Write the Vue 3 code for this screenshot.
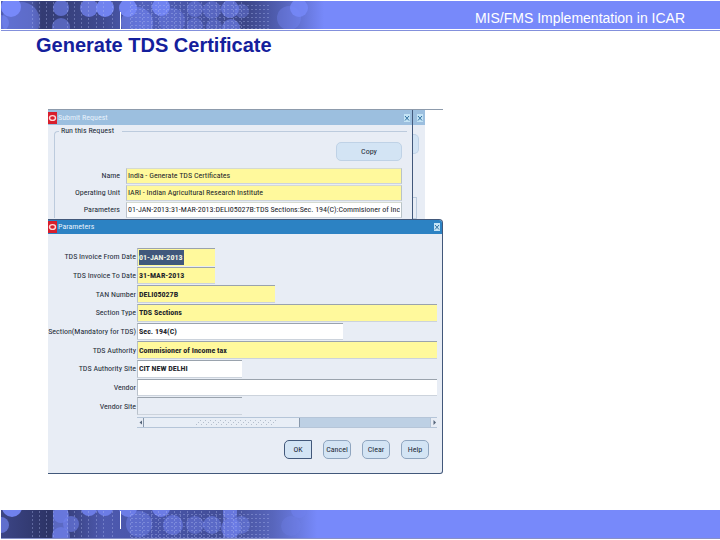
<script setup>
import { ref } from 'vue'

const requestRows = ref([
  { id: 'req-name', label: 'Name', value: 'India - Generate TDS Certificates', tone: 'required' },
  { id: 'req-unit', label: 'Operating Unit', value: 'IARI - Indian Agricultural Research Institute', tone: 'required' },
  { id: 'req-params', label: 'Parameters', value: '01-JAN-2013:31-MAR-2013:DELI05027B:TDS Sections:Sec. 194(C):Commisioner of Income', tone: 'plain' }
])

const paramRows = ref([
  { id: 'p-from', label: 'TDS Invoice From Date', value: '01-JAN-2013', tone: 'required', size: 'date', selected: true },
  { id: 'p-to', label: 'TDS Invoice To Date', value: '31-MAR-2013', tone: 'required', size: 'date' },
  { id: 'p-tan', label: 'TAN Number', value: 'DELI05027B', tone: 'required', size: 'medium' },
  { id: 'p-type', label: 'Section Type', value: 'TDS Sections', tone: 'required', size: 'full' },
  { id: 'p-section', label: 'Section(Mandatory for TDS)', value: 'Sec. 194(C)', tone: 'plain', size: 'wide' },
  { id: 'p-auth', label: 'TDS Authority', value: 'Commisioner of Income tax', tone: 'required', size: 'full' },
  { id: 'p-site', label: 'TDS Authority Site', value: 'CIT NEW DELHI', tone: 'plain', size: 'short' },
  { id: 'p-vendor', label: 'Vendor', value: '', tone: 'plain', size: 'full' },
  { id: 'p-vsite', label: 'Vendor Site', value: '', tone: 'off', size: 'short' }
])

const columns = [32, 39, 46, 53, 67, 74, 81, 88, 96, 103, 112, 130, 142, 151, 158, 166, 174, 180, 187, 194, 201, 209, 216, 224, 233, 241]
const lines = [4, 8, 12, 16, 20, 24, 27]

const topDots = [
  [20, 20, 19, 0.45], [10, 6, 10, 1], [0, 22, 8, 0.5], [60, 7, 8, 0.6], [60, 26, 9, 0.5],
  [88, 7, 9, 0.7], [104, 7, 9, 0.9], [127, 7, 9, 0.9], [136, 22, 16, 0.5], [160, 6, 9, 0.85],
  [171, 20, 13, 0.35], [194, 8, 8, 0.4], [211, 9, 9, 0.4], [194, 25, 8, 0.35], [213, 26, 8, 0.35],
  [229, 8, 9, 0.6], [230, 27, 9, 0.55], [241, 10, 7, 0.35], [288, 17, 12, 0.35], [298, 7, 9, 0.8]
]
const bottomDots = [
  [11, -3, 10, 1], [0, 15, 8, 0.7], [60, 5, 8, 0.6], [60, 26, 9, 0.6], [70, 14, 8, 0.6],
  [88, -2, 8, 0.9], [104, -2, 8, 0.9], [127, -2, 9, 0.9], [138, 14, 13, 0.5], [160, -2, 9, 0.9],
  [172, 15, 10, 0.6], [194, 15, 9, 0.45], [211, 15, 9, 0.55], [229, 2, 7, 0.6], [230, 18, 10, 0.6],
  [240, 15, 9, 0.5], [298, 0, 8, 0.6], [290, 16, 10, 0.3]
]
</script>

<template>
  <div class="page">
    <header class="band band-top">
      <svg class="art" viewBox="0 0 340 28" aria-hidden="true">
        <defs>
          <linearGradient id="shadeTop">
            <stop offset="0" stop-color="#4f5cb4" />
            <stop offset="0.09" stop-color="#48549f" />
            <stop offset="0.12" stop-color="#333b72" />
            <stop offset="0.3" stop-color="#3f4a90" />
            <stop offset="0.42" stop-color="#5261bc" />
            <stop offset="0.56" stop-color="#4855a6" />
            <stop offset="0.72" stop-color="#3c4688" />
            <stop offset="0.82" stop-color="#5260b4" />
            <stop offset="0.95" stop-color="#7789fa" />
          </linearGradient>
        </defs>
        <rect width="340" height="28" fill="url(#shadeTop)" />
        <circle v-for="(d, i) in topDots" :key="i" :cx="d[0]" :cy="d[1]" :r="d[2]" :opacity="d[3]" fill="#7789fa" />
        <g stroke="#b4c0f4" stroke-dasharray="2 2" opacity="0.35">
          <line v-for="x in columns" :key="x" :x1="x - 0.5" :x2="x - 0.5" y1="1" y2="28" />
          <line v-for="y in lines" :key="y" x1="130" x2="270" :y1="y + 0.5" :y2="y + 0.5" />
        </g>
        <rect x="119" y="11" width="1" height="17" fill="#fff" />
      </svg>
      <p class="course">MIS/FMS Implementation in ICAR</p>
    </header>

    <main class="content">
      <h1>Generate TDS Certificate</h1>

      <div class="stage">
        <div class="request-area">
          <section class="request">
            <div class="bar bar-idle">
              <svg class="logo" viewBox="0 0 9 12" aria-hidden="true"><rect width="9" height="12" fill="#d81e2c" /><ellipse cx="4.5" cy="6" rx="3" ry="2.4" fill="none" stroke="#ffd9d9" stroke-width="1.4" /></svg>
              <h2>Submit Request</h2>
              <button class="close" type="button" aria-label="Close request"><svg viewBox="0 0 6 8"><path d="M1 2L5 6.5M5 2L1 6.5" stroke="#2f6f9f" stroke-width="1" /></svg></button>
            </div>
            <fieldset>
              <legend>Run this Request</legend>
              <div class="copy-line"><button class="copy" type="button">Copy</button></div>
              <div v-for="row in requestRows" :key="row.id" class="request-row">
                <label :for="row.id">{{ row.label }}</label>
                <input :id="row.id" v-model="row.value" type="text" :class="row.tone" />
              </div>
            </fieldset>
          </section>
          <aside class="behind">
            <div class="bar bar-idle">
              <button class="close" type="button" aria-label="Close window"><svg viewBox="0 0 6 8"><path d="M1 2L5 6.5M5 2L1 6.5" stroke="#2f6f9f" stroke-width="1" /></svg></button>
            </div>
            <div class="sliver"></div>
            <div class="rail"></div>
          </aside>
        </div>

        <section class="params">
          <div class="bar bar-active">
            <svg class="logo" viewBox="0 0 9 12" aria-hidden="true"><rect width="9" height="12" fill="#d81e2c" /><ellipse cx="4.5" cy="6" rx="3" ry="2.4" fill="none" stroke="#ffd9d9" stroke-width="1.4" /></svg>
            <h2>Parameters</h2>
            <button class="close" type="button" aria-label="Close parameters"><svg viewBox="0 0 6 8"><path d="M1 2L5 6.5M5 2L1 6.5" stroke="#2f6f9f" stroke-width="1" /></svg></button>
          </div>
          <form @submit.prevent>
            <div class="param-rows">
              <div v-for="row in paramRows" :key="row.id" class="param-row">
                <label :for="row.id">{{ row.label }}</label>
                <div v-if="row.selected" class="selected-field" :class="[row.tone, row.size]">
                  <input :id="row.id" v-model="row.value" type="text" class="marked" />
                </div>
                <input v-else :id="row.id" v-model="row.value" type="text" :class="[row.tone, row.size]" />
              </div>
            </div>
            <div class="scroll">
              <button type="button" aria-label="Scroll left"><svg viewBox="0 0 7 9"><path d="M5 2.5V6.5L2.5 4.5Z" fill="#55657a" /></svg></button>
              <div class="thumb">
                <svg viewBox="0 0 80 8" aria-hidden="true"><path d="M0 6.5H80M2 4.5H80M4 2.5H80" stroke="#b4bfcd" stroke-dasharray="1 4" /></svg>
              </div>
              <button type="button" aria-label="Scroll right"><svg viewBox="0 0 7 9"><path d="M2.5 2V7L5 4.5Z" fill="#55657a" /></svg></button>
            </div>
            <div class="actions">
              <button type="submit" class="primary">OK</button>
              <button type="button">Cancel</button>
              <button type="button">Clear</button>
              <button type="button">Help</button>
            </div>
          </form>
        </section>
      </div>
    </main>

    <footer class="band band-bottom">
      <svg class="art" viewBox="0 0 340 28" aria-hidden="true">
        <defs>
          <linearGradient id="shadeBottom">
            <stop offset="0" stop-color="#3c4586" />
            <stop offset="0.14" stop-color="#2d3466" />
            <stop offset="0.3" stop-color="#4d59ae" />
            <stop offset="0.45" stop-color="#4855aa" />
            <stop offset="0.66" stop-color="#424d96" />
            <stop offset="0.8" stop-color="#5866bc" />
            <stop offset="0.93" stop-color="#7789fa" />
          </linearGradient>
        </defs>
        <rect width="340" height="28" fill="url(#shadeBottom)" />
        <rect x="52" width="15" height="28" fill="#6c7ce2" opacity="0.7" />
        <rect x="222" width="14" height="28" fill="#6c7ce2" opacity="0.6" />
        <circle v-for="(d, i) in bottomDots" :key="i" :cx="d[0]" :cy="d[1]" :r="d[2]" :opacity="d[3]" fill="#7081ec" />
        <g stroke="#b4c0f4" stroke-dasharray="2 2" opacity="0.35">
          <line v-for="x in columns" :key="x" :x1="x - 0.5" :x2="x - 0.5" y1="1" y2="28" />
          <line v-for="y in lines" :key="y" x1="130" x2="270" :y1="y + 0.5" :y2="y + 0.5" />
        </g>
        <rect x="119" y="1" width="1" height="18" fill="#fff" />
      </svg>
    </footer>
  </div>
</template>

<style>
body { margin: 0; background: #fff; }
</style>

<style scoped>
* { box-sizing: border-box; }
.page { min-height: 100vh; display: flex; flex-direction: column; font-family: "Liberation Sans", Arial, sans-serif; padding-bottom: 1px; }
.band { display: flex; align-items: center; background: #7789fa; }
.band-top { margin: 1px 0 0 1px; height: 28px; box-shadow: 0 1px #fff, 0 2px #8390dc; }
.band-bottom { margin-left: 1px; height: 29px; border-bottom: 1px solid #8790c8; }
.art { width: 340px; height: 28px; flex: none; display: block; }
.course { margin: 6px 35px 0 auto; font-size: 14px; line-height: 18px; color: #fff; }
.content { flex: 1; padding: 4px 0 0 48px; }
h1 { margin: 0 0 0 -12px; font-size: 20px; line-height: 24px; color: #14209c; }
.stage { width: 58%; min-width: 395px; margin-top: 52px; font-family: "Roboto Condensed", "Liberation Sans", Arial, sans-serif; font-size: 8px; color: #222a36; }
.request-area { display: flex; border-top: 1px solid #8d9bac; }
.request { flex: 1; min-width: 0; background: #e8edf5; border-right: 1px solid #42587a; }
.behind { width: 12px; margin-right: 18px; background: #e8edf5; }
.bar { display: flex; align-items: center; height: 15px; padding-right: 2px; }
.bar-idle { background: #9cbfdf; color: #e6f1fb; }
.bar-active { background: #2c82c3; color: #e6f1fb; }
.logo { width: 9px; height: 12px; flex: none; }
h2 { flex: 1; margin: 0; padding-left: 1px; font-size: 8px; line-height: 12px; font-weight: 400; }
button { font: inherit; color: inherit; padding: 0; margin: 0; border: 0; background: none; }
.close { width: 6px; height: 8px; background: #c3e3f5; margin-left: auto; flex: none; }
.close svg { display: block; width: 6px; height: 8px; }
.behind .bar { padding-right: 2px; }
fieldset { margin: 0 5px 0 6px; padding: 0 5px 0 0; border: 1px solid #bccbdd; border-bottom: 0; border-right: 0; border-radius: 4px 0 0; min-width: 0; }
legend { margin-left: 4px; padding: 0 8px 0 2px; line-height: 12px; }
.copy-line { display: flex; justify-content: flex-end; padding: 5px 0 6px; }
.copy { width: 66px; height: 19px; border: 1px solid #bfd2e6; border-radius: 5px; background: #d3e4f4; }
.request-row { display: flex; align-items: center; height: 17px; }
.request-row label { width: 65px; padding: 0; text-align: right; margin-right: 6px; flex: none; }
input { min-width: 0; height: 100%; margin: 0; padding: 0 1px; font: inherit; color: #22242a; border: 0; border-top: 1px solid #9aa3ad; border-left: 1px solid #b9c1ca; border-bottom: 1px solid #ccd3dc; border-radius: 0; background: #fff; }
.request-row input { flex: 1; height: 16px; border-top-color: #d5dad0; border-right: 1px solid #b8c3c8; }
.required { background: #fff99c; }
.off { background: #e8edf5; }
.sliver { width: 6px; height: 20px; margin-top: 9px; background: #d3e4f4; border: 1px solid #bfd2e6; border-left: 0; border-radius: 0 5px 5px 0; }
.rail { width: 4px; height: 22px; margin-top: 43px; border: 1px solid #bccbdd; border-left: 0; }
.params { background: #e8edf5; border: 1px solid #42587a; border-left: 0; border-radius: 0 4px 3px 0; overflow: hidden; }
.bar-active { height: 14px; }
form { padding: 14px 5px 14px 0; }
.param-rows { display: grid; grid-template-rows: repeat(9, 1fr); height: 167px; row-gap: 1px; }
.param-row { display: flex; align-items: center; }
.param-row label { width: 88px; margin-right: 1px; display: flex; justify-content: flex-end; white-space: nowrap; flex: none; }
.param-row input { font-weight: 700; }
.date { width: 78px; }
.medium { width: 138px; }
.wide { width: 206px; }
.short { width: 105px; }
.full { flex: 1; }
.selected-field { height: 100%; padding: 1px 0 1px 1px; border-top: 1px solid #9aa3ad; border-left: 1px solid #b9c1ca; display: flex; }
.param-row .marked { width: 45px; padding: 0; border: 0; background: #40587c; color: #f2f5e4; }
.scroll { display: flex; margin: 2px 0 0 89px; height: 11px; background: #bdd0e4; border: 1px solid #b5c5d8; border-width: 1px 0; }
.scroll button { width: 7px; background: #e8edf5; border-right: 1px solid #8797aa; }
.scroll button:last-child { margin-left: auto; border-right: 0; border-left: 1px solid #b5c5d8; }
.scroll button svg { display: block; width: 7px; height: 9px; }
.thumb { width: 156px; display: flex; justify-content: center; background: #e8eef6; border-right: 1px solid #8797aa; }
.thumb svg { width: 80px; height: 8px; margin-left: 28px; }
.actions { display: flex; justify-content: flex-end; gap: 11px; padding: 12px 8px 0 0; }
.actions button { width: 28px; height: 19px; border: 1px solid #8fa5bf; border-radius: 5px; background: #d3e4f4; }
.actions .primary { border-color: #42587a; border-radius: 5px 0 0 5px; }
</style>
